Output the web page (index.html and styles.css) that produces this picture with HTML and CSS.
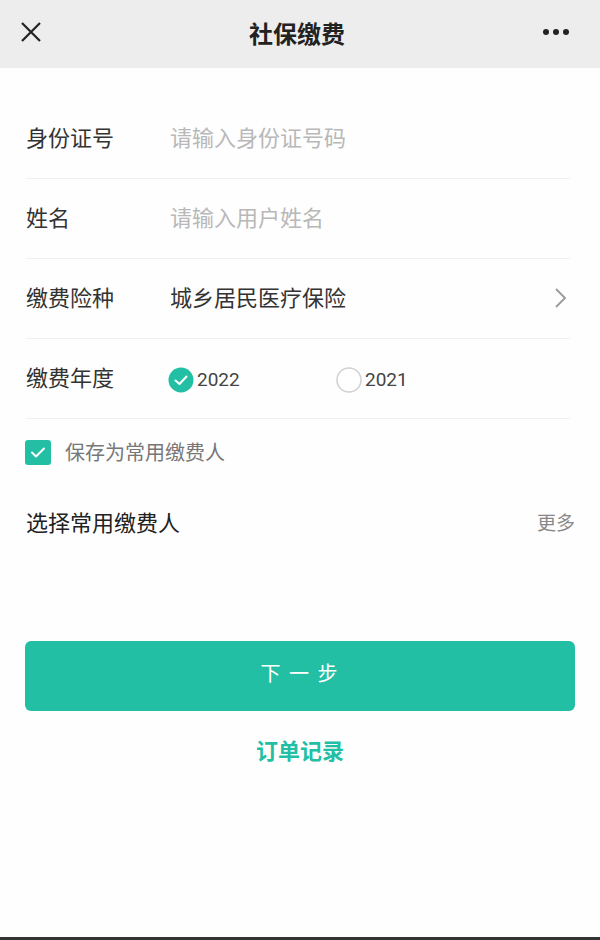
FILE: index.html
```html
<!DOCTYPE html>
<html lang="zh">
<head>
<meta charset="utf-8">
<link rel="stylesheet" href="styles.css">
</head>
<body>
<div class="page">
  <header class="topbar">
    <svg class="close" width="22" height="22" viewBox="0 0 22 22"><path d="M2 2L20 20M20 2L2 20" stroke="#222" stroke-width="2.2" fill="none"/></svg>
    <div class="title">社保缴费</div>
    <svg class="more" width="28" height="8" viewBox="0 0 28 8"><circle cx="4" cy="4" r="3" fill="#222"/><circle cx="14" cy="4" r="3" fill="#222"/><circle cx="24" cy="4" r="3" fill="#222"/></svg>
  </header>
  <main class="form">
    <div class="row">
      <div class="label">身份证号</div>
      <div class="value placeholder">请输入身份证号码</div>
    </div>
    <div class="row">
      <div class="label">姓名</div>
      <div class="value placeholder">请输入用户姓名</div>
    </div>
    <div class="row">
      <div class="label">缴费险种</div>
      <div class="value">城乡居民医疗保险</div>
      <svg class="chevron" width="14" height="22" viewBox="0 0 14 22"><path d="M2 2L11 11L2 20" stroke="#999" stroke-width="1.8" fill="none"/></svg>
    </div>
    <div class="row">
      <div class="label">缴费年度</div>
      <div class="radios">
        <div class="radio">
          <svg width="26" height="26" viewBox="0 0 26 26"><circle cx="13" cy="13" r="12.5" fill="#22bfa4"/><path d="M7.5 13.5L11.5 17L18.5 9.5" stroke="#fff" stroke-width="2" fill="none" stroke-linecap="round" stroke-linejoin="round"/></svg>
          <span>2022</span>
        </div>
        <div class="radio">
          <svg width="26" height="26" viewBox="0 0 26 26"><circle cx="13" cy="13" r="12" fill="#fff" stroke="#d0d0d0" stroke-width="1.5"/></svg>
          <span>2021</span>
        </div>
      </div>
    </div>
    <div class="save">
      <svg width="26" height="25" viewBox="0 0 26 25"><rect x="0" y="0" width="26" height="25" rx="3" fill="#22bfa4"/><path d="M7 12.5L11 16.5L19 8.5" stroke="#fff" stroke-width="2" fill="none" stroke-linecap="round" stroke-linejoin="round"/></svg>
      <span>保存为常用缴费人</span>
    </div>
    <div class="common">
      <div class="common-title">选择常用缴费人</div>
      <div class="common-more">更多</div>
    </div>
    <button class="next">下 一 步</button>
    <div class="orders">订单记录</div>
  </main>
  <div class="bottom-line"></div>
</div>
</body>
</html>
```
FILE: styles.css
```css
* { box-sizing: border-box; }
html, body { margin: 0; padding: 0; }
body {
  font-family: "Noto Sans CJK SC", "Noto Sans", sans-serif;
  background: #fff;
  color: #333;
}
.page {
  width: 600px;
  height: 940px;
  display: flex;
  flex-direction: column;
  background: #fefefe;
}
.topbar {
  height: 68px;
  background: #ededed;
  display: flex;
  align-items: center;
  justify-content: space-between;
  padding: 0 30px 0 20px;
  flex-shrink: 0;
}
.close { margin-top: -4px; }
.title {
  font-size: 24px;
  font-weight: 700;
  color: #222;
  margin-left: 10px;
  margin-top: -4px;
}
.more { margin-top: -4px; }
.form {
  flex: 1;
  padding: 31px 25px 0 25px;
  display: flex;
  flex-direction: column;
}
.row {
  height: 80px;
  display: flex;
  align-items: center;
  border-bottom: 1px solid #f0f0f0;
  margin: 0 5px 0 1px;
  padding-bottom: 6px;
}
.label {
  width: 144px;
  font-size: 22px;
  color: #333;
}
.value {
  flex: 1;
  font-size: 22px;
  color: #333;
}
.placeholder { color: #b8b8b8; }
.chevron { margin-right: 2px; margin-top: 4px; }
.radios {
  display: flex;
  align-items: center;
}
.radio {
  display: flex;
  align-items: center;
  gap: 3px;
  width: 170px;
  margin-left: -2px;
  margin-top: 8px;
}
.radio span {
  font-family: Roboto, "Noto Sans", sans-serif;
  font-size: 19px;
  color: #444;
}
.save {
  display: flex;
  align-items: center;
  gap: 14px;
  height: 70px;
  padding-bottom: 4px;
}
.save span {
  font-size: 20px;
  color: #777;
  margin-top: -2px;
}
.common {
  display: flex;
  align-items: center;
  justify-content: space-between;
  height: 72px;
  padding: 0 0 0 1px;
  margin-top: -4px;
}
.common-title {
  font-size: 22px;
  color: #222;
}
.common-more {
  font-size: 19px;
  color: #888;
}
.next {
  margin-top: 84px;
  height: 70px;
  width: 100%;
  border: none;
  border-radius: 6px;
  background: #22bfa5;
  color: #fff;
  font-family: "Noto Sans CJK SC", sans-serif;
  font-size: 20px;
  letter-spacing: 2px;
  padding: 0 0 8px 0;
}
.orders {
  margin-top: 22px;
  text-align: center;
  font-size: 22px;
  font-weight: 700;
  color: #22bfa5;
}
.bottom-line {
  height: 3px;
  background: #333;
  flex-shrink: 0;
}
```
